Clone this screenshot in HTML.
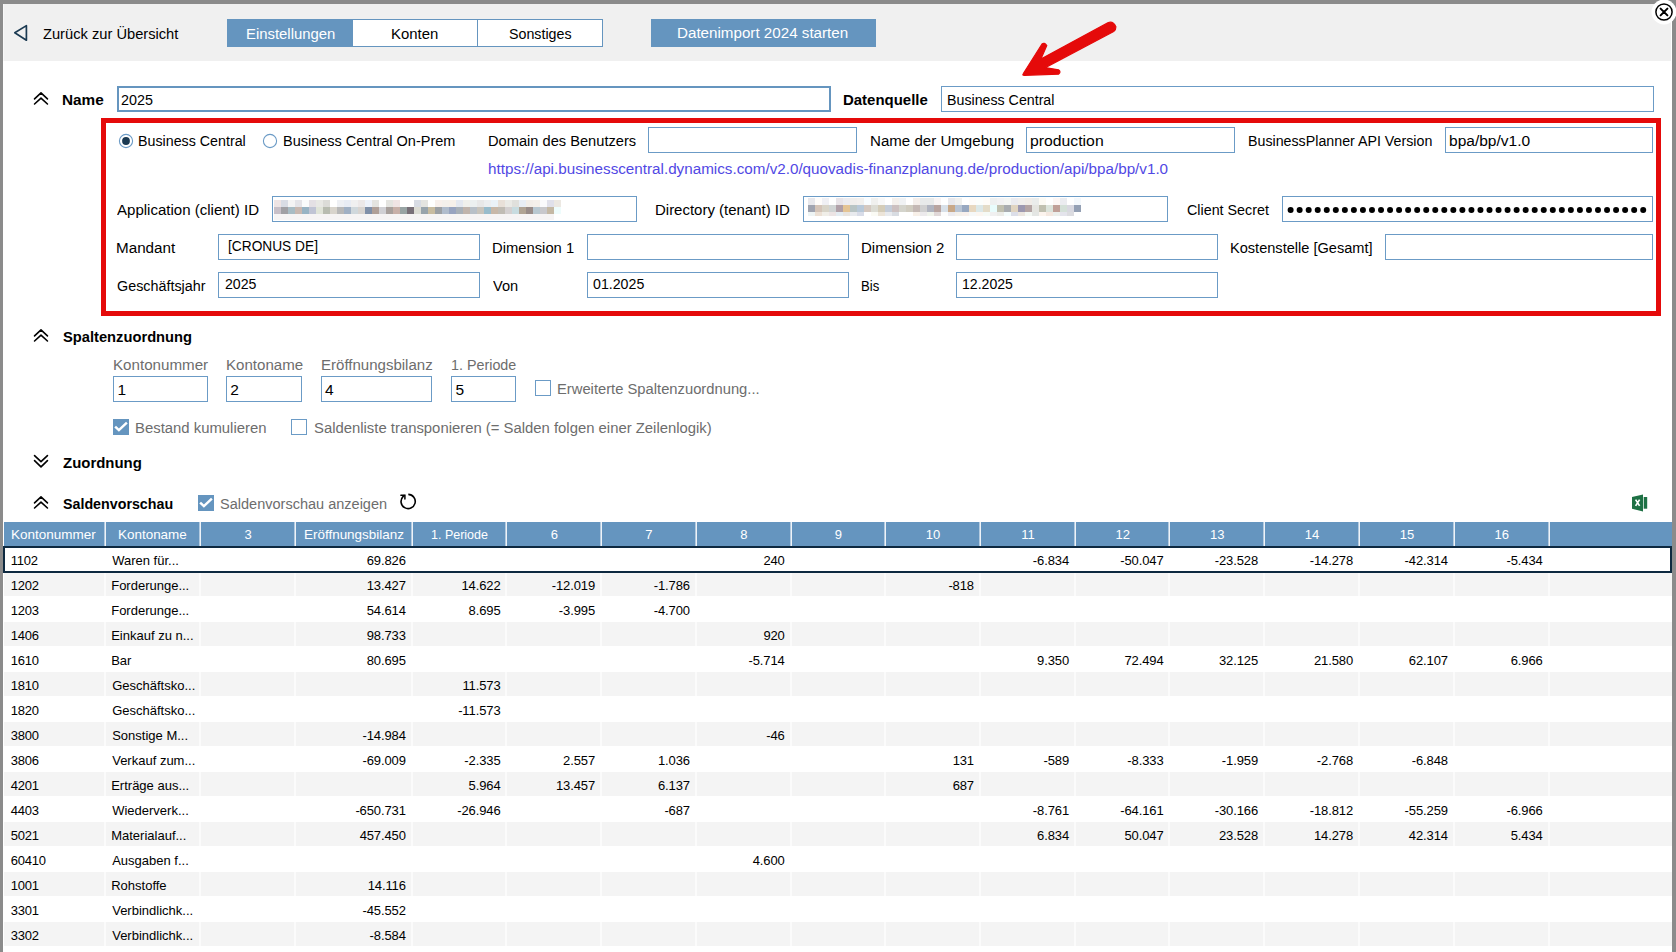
<!DOCTYPE html>
<html><head><meta charset="utf-8"><title>Datenimport Einstellungen</title>
<style>
html,body{margin:0;padding:0;}
body{width:1676px;height:952px;overflow:hidden;background:#fff;position:relative;font-family:"Liberation Sans",sans-serif;}
.b{position:absolute;}
.t{position:absolute;white-space:pre;transform-origin:0 0;line-height:normal;font-family:"Liberation Sans",sans-serif;color:#000;}
</style></head><body>
<div class="b" style="left:4px;top:4px;width:1667px;height:57px;background:#f0f0f0"></div>
<div class="b" style="left:3px;top:4px;width:1px;height:57px;background:#f7f7f7"></div>
<div class="b" style="left:0px;top:0px;width:1676px;height:4px;background:#8b8b8b"></div>
<div class="b" style="left:0px;top:0px;width:3px;height:952px;background:#8b8b8b"></div>
<div class="b" style="left:1672px;top:0px;width:4px;height:952px;background:#8b8b8b"></div>
<div class="b" style="left:227px;top:19px;width:376px;height:28px;background:#fff;border:1px solid #6595bf;box-sizing:border-box"></div>
<div class="b" style="left:227px;top:19px;width:126px;height:28px;background:#6595bf"></div>
<div class="b" style="left:477px;top:19px;width:1px;height:28px;background:#6595bf"></div>
<div class="b" style="left:651px;top:19px;width:225px;height:28px;background:#6595bf"></div>
<div class="b" style="left:117px;top:86px;width:714px;height:26px;border:2px solid #6595bf;box-sizing:border-box"></div>
<div class="b" style="left:941px;top:86px;width:713px;height:26px;border:1px solid #6b9bc6;box-sizing:border-box"></div>
<div class="b" style="left:101px;top:118px;width:1560px;height:198px;border:5px solid #e50a0a;box-sizing:border-box"></div>
<div class="b" style="left:648px;top:127px;width:209px;height:26px;border:1px solid #6b9bc6;box-sizing:border-box"></div>
<div class="b" style="left:1026px;top:127px;width:209px;height:26px;border:1px solid #6b9bc6;box-sizing:border-box"></div>
<div class="b" style="left:1445px;top:127px;width:208px;height:26px;border:1px solid #6b9bc6;box-sizing:border-box"></div>
<div class="b" style="left:272px;top:196px;width:365px;height:26px;border:1px solid #6b9bc6;box-sizing:border-box"></div>
<div class="b" style="left:803px;top:196px;width:365px;height:26px;border:1px solid #6b9bc6;box-sizing:border-box"></div>
<div class="b" style="left:1282px;top:196px;width:371px;height:26px;border:1px solid #6b9bc6;box-sizing:border-box"></div>
<div class="b" style="left:218px;top:234px;width:262px;height:26px;border:1px solid #6b9bc6;box-sizing:border-box"></div>
<div class="b" style="left:587px;top:234px;width:262px;height:26px;border:1px solid #6b9bc6;box-sizing:border-box"></div>
<div class="b" style="left:956px;top:234px;width:262px;height:26px;border:1px solid #6b9bc6;box-sizing:border-box"></div>
<div class="b" style="left:1385px;top:234px;width:268px;height:26px;border:1px solid #6b9bc6;box-sizing:border-box"></div>
<div class="b" style="left:218px;top:272px;width:262px;height:26px;border:1px solid #6b9bc6;box-sizing:border-box"></div>
<div class="b" style="left:587px;top:272px;width:262px;height:26px;border:1px solid #6b9bc6;box-sizing:border-box"></div>
<div class="b" style="left:956px;top:272px;width:262px;height:26px;border:1px solid #6b9bc6;box-sizing:border-box"></div>
<div class="b" style="left:113px;top:376px;width:95px;height:26px;border:1px solid #6b9bc6;box-sizing:border-box"></div>
<div class="b" style="left:226px;top:376px;width:76px;height:26px;border:1px solid #6b9bc6;box-sizing:border-box"></div>
<div class="b" style="left:321px;top:376px;width:111px;height:26px;border:1px solid #6b9bc6;box-sizing:border-box"></div>
<div class="b" style="left:451px;top:376px;width:65px;height:26px;border:1px solid #6b9bc6;box-sizing:border-box"></div>
<div class="b" style="left:535px;top:380px;width:16px;height:16px;border:1px solid #6b9bc6;box-sizing:border-box;background:#fff"></div>
<div class="b" style="left:113px;top:419px;width:16px;height:16px;background:#6595bf"></div>
<div class="b" style="left:291px;top:419px;width:16px;height:16px;border:1px solid #6b9bc6;box-sizing:border-box;background:#fff"></div>
<div class="b" style="left:198px;top:495px;width:16px;height:16px;background:#6595bf"></div>
<div class="b" style="left:4px;top:522px;width:1668px;height:24px;background:#6595bf"></div>
<div class="b" style="left:104px;top:522px;width:1px;height:24px;background:#b4cbe0"></div>
<div class="b" style="left:105px;top:522px;width:1px;height:24px;background:#eef3f8"></div>
<div class="b" style="left:199px;top:522px;width:1px;height:24px;background:#b4cbe0"></div>
<div class="b" style="left:200px;top:522px;width:1px;height:24px;background:#eef3f8"></div>
<div class="b" style="left:294px;top:522px;width:1px;height:24px;background:#b4cbe0"></div>
<div class="b" style="left:295px;top:522px;width:1px;height:24px;background:#eef3f8"></div>
<div class="b" style="left:411px;top:522px;width:1px;height:24px;background:#b4cbe0"></div>
<div class="b" style="left:412px;top:522px;width:1px;height:24px;background:#eef3f8"></div>
<div class="b" style="left:505px;top:522px;width:1px;height:24px;background:#b4cbe0"></div>
<div class="b" style="left:506px;top:522px;width:1px;height:24px;background:#eef3f8"></div>
<div class="b" style="left:600px;top:522px;width:1px;height:24px;background:#b4cbe0"></div>
<div class="b" style="left:601px;top:522px;width:1px;height:24px;background:#eef3f8"></div>
<div class="b" style="left:695px;top:522px;width:1px;height:24px;background:#b4cbe0"></div>
<div class="b" style="left:696px;top:522px;width:1px;height:24px;background:#eef3f8"></div>
<div class="b" style="left:790px;top:522px;width:1px;height:24px;background:#b4cbe0"></div>
<div class="b" style="left:791px;top:522px;width:1px;height:24px;background:#eef3f8"></div>
<div class="b" style="left:884px;top:522px;width:1px;height:24px;background:#b4cbe0"></div>
<div class="b" style="left:885px;top:522px;width:1px;height:24px;background:#eef3f8"></div>
<div class="b" style="left:979px;top:522px;width:1px;height:24px;background:#b4cbe0"></div>
<div class="b" style="left:980px;top:522px;width:1px;height:24px;background:#eef3f8"></div>
<div class="b" style="left:1074px;top:522px;width:1px;height:24px;background:#b4cbe0"></div>
<div class="b" style="left:1075px;top:522px;width:1px;height:24px;background:#eef3f8"></div>
<div class="b" style="left:1168px;top:522px;width:1px;height:24px;background:#b4cbe0"></div>
<div class="b" style="left:1169px;top:522px;width:1px;height:24px;background:#eef3f8"></div>
<div class="b" style="left:1263px;top:522px;width:1px;height:24px;background:#b4cbe0"></div>
<div class="b" style="left:1264px;top:522px;width:1px;height:24px;background:#eef3f8"></div>
<div class="b" style="left:1358px;top:522px;width:1px;height:24px;background:#b4cbe0"></div>
<div class="b" style="left:1359px;top:522px;width:1px;height:24px;background:#eef3f8"></div>
<div class="b" style="left:1453px;top:522px;width:1px;height:24px;background:#b4cbe0"></div>
<div class="b" style="left:1454px;top:522px;width:1px;height:24px;background:#eef3f8"></div>
<div class="b" style="left:1548px;top:522px;width:1px;height:24px;background:#b4cbe0"></div>
<div class="b" style="left:1549px;top:522px;width:1px;height:24px;background:#eef3f8"></div>
<div class="b" style="left:4px;top:572px;width:1668px;height:24px;background:#f4f4f4"></div>
<div class="b" style="left:104px;top:572px;width:2px;height:24px;background:#fbfbfb"></div>
<div class="b" style="left:199px;top:572px;width:2px;height:24px;background:#fbfbfb"></div>
<div class="b" style="left:294px;top:572px;width:2px;height:24px;background:#fbfbfb"></div>
<div class="b" style="left:411px;top:572px;width:2px;height:24px;background:#fbfbfb"></div>
<div class="b" style="left:505px;top:572px;width:2px;height:24px;background:#fbfbfb"></div>
<div class="b" style="left:600px;top:572px;width:2px;height:24px;background:#fbfbfb"></div>
<div class="b" style="left:695px;top:572px;width:2px;height:24px;background:#fbfbfb"></div>
<div class="b" style="left:790px;top:572px;width:2px;height:24px;background:#fbfbfb"></div>
<div class="b" style="left:884px;top:572px;width:2px;height:24px;background:#fbfbfb"></div>
<div class="b" style="left:979px;top:572px;width:2px;height:24px;background:#fbfbfb"></div>
<div class="b" style="left:1074px;top:572px;width:2px;height:24px;background:#fbfbfb"></div>
<div class="b" style="left:1168px;top:572px;width:2px;height:24px;background:#fbfbfb"></div>
<div class="b" style="left:1263px;top:572px;width:2px;height:24px;background:#fbfbfb"></div>
<div class="b" style="left:1358px;top:572px;width:2px;height:24px;background:#fbfbfb"></div>
<div class="b" style="left:1453px;top:572px;width:2px;height:24px;background:#fbfbfb"></div>
<div class="b" style="left:1548px;top:572px;width:2px;height:24px;background:#fbfbfb"></div>
<div class="b" style="left:4px;top:622px;width:1668px;height:24px;background:#f4f4f4"></div>
<div class="b" style="left:104px;top:622px;width:2px;height:24px;background:#fbfbfb"></div>
<div class="b" style="left:199px;top:622px;width:2px;height:24px;background:#fbfbfb"></div>
<div class="b" style="left:294px;top:622px;width:2px;height:24px;background:#fbfbfb"></div>
<div class="b" style="left:411px;top:622px;width:2px;height:24px;background:#fbfbfb"></div>
<div class="b" style="left:505px;top:622px;width:2px;height:24px;background:#fbfbfb"></div>
<div class="b" style="left:600px;top:622px;width:2px;height:24px;background:#fbfbfb"></div>
<div class="b" style="left:695px;top:622px;width:2px;height:24px;background:#fbfbfb"></div>
<div class="b" style="left:790px;top:622px;width:2px;height:24px;background:#fbfbfb"></div>
<div class="b" style="left:884px;top:622px;width:2px;height:24px;background:#fbfbfb"></div>
<div class="b" style="left:979px;top:622px;width:2px;height:24px;background:#fbfbfb"></div>
<div class="b" style="left:1074px;top:622px;width:2px;height:24px;background:#fbfbfb"></div>
<div class="b" style="left:1168px;top:622px;width:2px;height:24px;background:#fbfbfb"></div>
<div class="b" style="left:1263px;top:622px;width:2px;height:24px;background:#fbfbfb"></div>
<div class="b" style="left:1358px;top:622px;width:2px;height:24px;background:#fbfbfb"></div>
<div class="b" style="left:1453px;top:622px;width:2px;height:24px;background:#fbfbfb"></div>
<div class="b" style="left:1548px;top:622px;width:2px;height:24px;background:#fbfbfb"></div>
<div class="b" style="left:4px;top:672px;width:1668px;height:24px;background:#f4f4f4"></div>
<div class="b" style="left:104px;top:672px;width:2px;height:24px;background:#fbfbfb"></div>
<div class="b" style="left:199px;top:672px;width:2px;height:24px;background:#fbfbfb"></div>
<div class="b" style="left:294px;top:672px;width:2px;height:24px;background:#fbfbfb"></div>
<div class="b" style="left:411px;top:672px;width:2px;height:24px;background:#fbfbfb"></div>
<div class="b" style="left:505px;top:672px;width:2px;height:24px;background:#fbfbfb"></div>
<div class="b" style="left:600px;top:672px;width:2px;height:24px;background:#fbfbfb"></div>
<div class="b" style="left:695px;top:672px;width:2px;height:24px;background:#fbfbfb"></div>
<div class="b" style="left:790px;top:672px;width:2px;height:24px;background:#fbfbfb"></div>
<div class="b" style="left:884px;top:672px;width:2px;height:24px;background:#fbfbfb"></div>
<div class="b" style="left:979px;top:672px;width:2px;height:24px;background:#fbfbfb"></div>
<div class="b" style="left:1074px;top:672px;width:2px;height:24px;background:#fbfbfb"></div>
<div class="b" style="left:1168px;top:672px;width:2px;height:24px;background:#fbfbfb"></div>
<div class="b" style="left:1263px;top:672px;width:2px;height:24px;background:#fbfbfb"></div>
<div class="b" style="left:1358px;top:672px;width:2px;height:24px;background:#fbfbfb"></div>
<div class="b" style="left:1453px;top:672px;width:2px;height:24px;background:#fbfbfb"></div>
<div class="b" style="left:1548px;top:672px;width:2px;height:24px;background:#fbfbfb"></div>
<div class="b" style="left:4px;top:722px;width:1668px;height:24px;background:#f4f4f4"></div>
<div class="b" style="left:104px;top:722px;width:2px;height:24px;background:#fbfbfb"></div>
<div class="b" style="left:199px;top:722px;width:2px;height:24px;background:#fbfbfb"></div>
<div class="b" style="left:294px;top:722px;width:2px;height:24px;background:#fbfbfb"></div>
<div class="b" style="left:411px;top:722px;width:2px;height:24px;background:#fbfbfb"></div>
<div class="b" style="left:505px;top:722px;width:2px;height:24px;background:#fbfbfb"></div>
<div class="b" style="left:600px;top:722px;width:2px;height:24px;background:#fbfbfb"></div>
<div class="b" style="left:695px;top:722px;width:2px;height:24px;background:#fbfbfb"></div>
<div class="b" style="left:790px;top:722px;width:2px;height:24px;background:#fbfbfb"></div>
<div class="b" style="left:884px;top:722px;width:2px;height:24px;background:#fbfbfb"></div>
<div class="b" style="left:979px;top:722px;width:2px;height:24px;background:#fbfbfb"></div>
<div class="b" style="left:1074px;top:722px;width:2px;height:24px;background:#fbfbfb"></div>
<div class="b" style="left:1168px;top:722px;width:2px;height:24px;background:#fbfbfb"></div>
<div class="b" style="left:1263px;top:722px;width:2px;height:24px;background:#fbfbfb"></div>
<div class="b" style="left:1358px;top:722px;width:2px;height:24px;background:#fbfbfb"></div>
<div class="b" style="left:1453px;top:722px;width:2px;height:24px;background:#fbfbfb"></div>
<div class="b" style="left:1548px;top:722px;width:2px;height:24px;background:#fbfbfb"></div>
<div class="b" style="left:4px;top:772px;width:1668px;height:24px;background:#f4f4f4"></div>
<div class="b" style="left:104px;top:772px;width:2px;height:24px;background:#fbfbfb"></div>
<div class="b" style="left:199px;top:772px;width:2px;height:24px;background:#fbfbfb"></div>
<div class="b" style="left:294px;top:772px;width:2px;height:24px;background:#fbfbfb"></div>
<div class="b" style="left:411px;top:772px;width:2px;height:24px;background:#fbfbfb"></div>
<div class="b" style="left:505px;top:772px;width:2px;height:24px;background:#fbfbfb"></div>
<div class="b" style="left:600px;top:772px;width:2px;height:24px;background:#fbfbfb"></div>
<div class="b" style="left:695px;top:772px;width:2px;height:24px;background:#fbfbfb"></div>
<div class="b" style="left:790px;top:772px;width:2px;height:24px;background:#fbfbfb"></div>
<div class="b" style="left:884px;top:772px;width:2px;height:24px;background:#fbfbfb"></div>
<div class="b" style="left:979px;top:772px;width:2px;height:24px;background:#fbfbfb"></div>
<div class="b" style="left:1074px;top:772px;width:2px;height:24px;background:#fbfbfb"></div>
<div class="b" style="left:1168px;top:772px;width:2px;height:24px;background:#fbfbfb"></div>
<div class="b" style="left:1263px;top:772px;width:2px;height:24px;background:#fbfbfb"></div>
<div class="b" style="left:1358px;top:772px;width:2px;height:24px;background:#fbfbfb"></div>
<div class="b" style="left:1453px;top:772px;width:2px;height:24px;background:#fbfbfb"></div>
<div class="b" style="left:1548px;top:772px;width:2px;height:24px;background:#fbfbfb"></div>
<div class="b" style="left:4px;top:822px;width:1668px;height:24px;background:#f4f4f4"></div>
<div class="b" style="left:104px;top:822px;width:2px;height:24px;background:#fbfbfb"></div>
<div class="b" style="left:199px;top:822px;width:2px;height:24px;background:#fbfbfb"></div>
<div class="b" style="left:294px;top:822px;width:2px;height:24px;background:#fbfbfb"></div>
<div class="b" style="left:411px;top:822px;width:2px;height:24px;background:#fbfbfb"></div>
<div class="b" style="left:505px;top:822px;width:2px;height:24px;background:#fbfbfb"></div>
<div class="b" style="left:600px;top:822px;width:2px;height:24px;background:#fbfbfb"></div>
<div class="b" style="left:695px;top:822px;width:2px;height:24px;background:#fbfbfb"></div>
<div class="b" style="left:790px;top:822px;width:2px;height:24px;background:#fbfbfb"></div>
<div class="b" style="left:884px;top:822px;width:2px;height:24px;background:#fbfbfb"></div>
<div class="b" style="left:979px;top:822px;width:2px;height:24px;background:#fbfbfb"></div>
<div class="b" style="left:1074px;top:822px;width:2px;height:24px;background:#fbfbfb"></div>
<div class="b" style="left:1168px;top:822px;width:2px;height:24px;background:#fbfbfb"></div>
<div class="b" style="left:1263px;top:822px;width:2px;height:24px;background:#fbfbfb"></div>
<div class="b" style="left:1358px;top:822px;width:2px;height:24px;background:#fbfbfb"></div>
<div class="b" style="left:1453px;top:822px;width:2px;height:24px;background:#fbfbfb"></div>
<div class="b" style="left:1548px;top:822px;width:2px;height:24px;background:#fbfbfb"></div>
<div class="b" style="left:4px;top:872px;width:1668px;height:24px;background:#f4f4f4"></div>
<div class="b" style="left:104px;top:872px;width:2px;height:24px;background:#fbfbfb"></div>
<div class="b" style="left:199px;top:872px;width:2px;height:24px;background:#fbfbfb"></div>
<div class="b" style="left:294px;top:872px;width:2px;height:24px;background:#fbfbfb"></div>
<div class="b" style="left:411px;top:872px;width:2px;height:24px;background:#fbfbfb"></div>
<div class="b" style="left:505px;top:872px;width:2px;height:24px;background:#fbfbfb"></div>
<div class="b" style="left:600px;top:872px;width:2px;height:24px;background:#fbfbfb"></div>
<div class="b" style="left:695px;top:872px;width:2px;height:24px;background:#fbfbfb"></div>
<div class="b" style="left:790px;top:872px;width:2px;height:24px;background:#fbfbfb"></div>
<div class="b" style="left:884px;top:872px;width:2px;height:24px;background:#fbfbfb"></div>
<div class="b" style="left:979px;top:872px;width:2px;height:24px;background:#fbfbfb"></div>
<div class="b" style="left:1074px;top:872px;width:2px;height:24px;background:#fbfbfb"></div>
<div class="b" style="left:1168px;top:872px;width:2px;height:24px;background:#fbfbfb"></div>
<div class="b" style="left:1263px;top:872px;width:2px;height:24px;background:#fbfbfb"></div>
<div class="b" style="left:1358px;top:872px;width:2px;height:24px;background:#fbfbfb"></div>
<div class="b" style="left:1453px;top:872px;width:2px;height:24px;background:#fbfbfb"></div>
<div class="b" style="left:1548px;top:872px;width:2px;height:24px;background:#fbfbfb"></div>
<div class="b" style="left:4px;top:922px;width:1668px;height:24px;background:#f4f4f4"></div>
<div class="b" style="left:104px;top:922px;width:2px;height:24px;background:#fbfbfb"></div>
<div class="b" style="left:199px;top:922px;width:2px;height:24px;background:#fbfbfb"></div>
<div class="b" style="left:294px;top:922px;width:2px;height:24px;background:#fbfbfb"></div>
<div class="b" style="left:411px;top:922px;width:2px;height:24px;background:#fbfbfb"></div>
<div class="b" style="left:505px;top:922px;width:2px;height:24px;background:#fbfbfb"></div>
<div class="b" style="left:600px;top:922px;width:2px;height:24px;background:#fbfbfb"></div>
<div class="b" style="left:695px;top:922px;width:2px;height:24px;background:#fbfbfb"></div>
<div class="b" style="left:790px;top:922px;width:2px;height:24px;background:#fbfbfb"></div>
<div class="b" style="left:884px;top:922px;width:2px;height:24px;background:#fbfbfb"></div>
<div class="b" style="left:979px;top:922px;width:2px;height:24px;background:#fbfbfb"></div>
<div class="b" style="left:1074px;top:922px;width:2px;height:24px;background:#fbfbfb"></div>
<div class="b" style="left:1168px;top:922px;width:2px;height:24px;background:#fbfbfb"></div>
<div class="b" style="left:1263px;top:922px;width:2px;height:24px;background:#fbfbfb"></div>
<div class="b" style="left:1358px;top:922px;width:2px;height:24px;background:#fbfbfb"></div>
<div class="b" style="left:1453px;top:922px;width:2px;height:24px;background:#fbfbfb"></div>
<div class="b" style="left:1548px;top:922px;width:2px;height:24px;background:#fbfbfb"></div>
<div class="b" style="left:3px;top:546px;width:1669px;height:27px;border:2px solid #0d2940;box-sizing:border-box"></div>
<div class="b" style="left:274px;top:200px;width:7px;height:7px;background:#eee4e4"></div>
<div class="b" style="left:281px;top:200px;width:7px;height:7px;background:#d8dce4"></div>
<div class="b" style="left:288px;top:200px;width:7px;height:7px;background:#f4f4f4"></div>
<div class="b" style="left:295px;top:200px;width:7px;height:7px;background:#e4e4e8"></div>
<div class="b" style="left:302px;top:200px;width:7px;height:7px;background:#fafcfc"></div>
<div class="b" style="left:309px;top:200px;width:7px;height:7px;background:#e4e0e4"></div>
<div class="b" style="left:316px;top:200px;width:7px;height:7px;background:#e8e8e4"></div>
<div class="b" style="left:323px;top:200px;width:7px;height:7px;background:#dcdcd8"></div>
<div class="b" style="left:330px;top:200px;width:7px;height:7px;background:#ffffff"></div>
<div class="b" style="left:337px;top:200px;width:7px;height:7px;background:#eef0f4"></div>
<div class="b" style="left:344px;top:200px;width:7px;height:7px;background:#e8ecf4"></div>
<div class="b" style="left:351px;top:200px;width:7px;height:7px;background:#f0f0f0"></div>
<div class="b" style="left:358px;top:200px;width:7px;height:7px;background:#ece8e8"></div>
<div class="b" style="left:365px;top:200px;width:7px;height:7px;background:#eef2fa"></div>
<div class="b" style="left:372px;top:200px;width:7px;height:7px;background:#e4e4e0"></div>
<div class="b" style="left:379px;top:200px;width:7px;height:7px;background:#ffffff"></div>
<div class="b" style="left:386px;top:200px;width:7px;height:7px;background:#e4e4e0"></div>
<div class="b" style="left:393px;top:200px;width:7px;height:7px;background:#f0e4e4"></div>
<div class="b" style="left:400px;top:200px;width:7px;height:7px;background:#ffffff"></div>
<div class="b" style="left:407px;top:200px;width:7px;height:7px;background:#ffffff"></div>
<div class="b" style="left:414px;top:200px;width:7px;height:7px;background:#d8dce4"></div>
<div class="b" style="left:421px;top:200px;width:7px;height:7px;background:#e4e4e0"></div>
<div class="b" style="left:428px;top:200px;width:7px;height:7px;background:#ffffff"></div>
<div class="b" style="left:435px;top:200px;width:7px;height:7px;background:#f8f0ec"></div>
<div class="b" style="left:442px;top:200px;width:7px;height:7px;background:#f4f0ec"></div>
<div class="b" style="left:449px;top:200px;width:7px;height:7px;background:#f6f0ea"></div>
<div class="b" style="left:456px;top:200px;width:7px;height:7px;background:#e4e8f0"></div>
<div class="b" style="left:463px;top:200px;width:7px;height:7px;background:#f0f0ec"></div>
<div class="b" style="left:470px;top:200px;width:7px;height:7px;background:#ecf0f0"></div>
<div class="b" style="left:477px;top:200px;width:7px;height:7px;background:#e8e8e8"></div>
<div class="b" style="left:484px;top:200px;width:7px;height:7px;background:#eceef0"></div>
<div class="b" style="left:491px;top:200px;width:7px;height:7px;background:#eaf2f8"></div>
<div class="b" style="left:498px;top:200px;width:7px;height:7px;background:#e8e0d8"></div>
<div class="b" style="left:505px;top:200px;width:7px;height:7px;background:#eaeae6"></div>
<div class="b" style="left:512px;top:200px;width:7px;height:7px;background:#e0e0dc"></div>
<div class="b" style="left:519px;top:200px;width:7px;height:7px;background:#e8eef4"></div>
<div class="b" style="left:526px;top:200px;width:7px;height:7px;background:#f2eee8"></div>
<div class="b" style="left:533px;top:200px;width:7px;height:7px;background:#f4f0ea"></div>
<div class="b" style="left:540px;top:200px;width:7px;height:7px;background:#fafafc"></div>
<div class="b" style="left:547px;top:200px;width:7px;height:7px;background:#e0e0ea"></div>
<div class="b" style="left:554px;top:200px;width:7px;height:7px;background:#ece8e2"></div>
<div class="b" style="left:561px;top:200px;width:7px;height:7px;background:#ffffff"></div>
<div class="b" style="left:274px;top:207px;width:7px;height:7px;background:#c8c0c8"></div>
<div class="b" style="left:281px;top:207px;width:7px;height:7px;background:#a0a0a4"></div>
<div class="b" style="left:288px;top:207px;width:7px;height:7px;background:#a8bcc4"></div>
<div class="b" style="left:295px;top:207px;width:7px;height:7px;background:#c8b8b0"></div>
<div class="b" style="left:302px;top:207px;width:7px;height:7px;background:#98b4c4"></div>
<div class="b" style="left:309px;top:207px;width:7px;height:7px;background:#c0c4d4"></div>
<div class="b" style="left:316px;top:207px;width:7px;height:7px;background:#e0e4d8"></div>
<div class="b" style="left:323px;top:207px;width:7px;height:7px;background:#b8bcb0"></div>
<div class="b" style="left:330px;top:207px;width:7px;height:7px;background:#d8d4cc"></div>
<div class="b" style="left:337px;top:207px;width:7px;height:7px;background:#b8b8b8"></div>
<div class="b" style="left:344px;top:207px;width:7px;height:7px;background:#a0b0c4"></div>
<div class="b" style="left:351px;top:207px;width:7px;height:7px;background:#d0d8dc"></div>
<div class="b" style="left:358px;top:207px;width:7px;height:7px;background:#d8d4d0"></div>
<div class="b" style="left:365px;top:207px;width:7px;height:7px;background:#8090a8"></div>
<div class="b" style="left:372px;top:207px;width:7px;height:7px;background:#b0a098"></div>
<div class="b" style="left:379px;top:207px;width:7px;height:7px;background:#d0d0d4"></div>
<div class="b" style="left:386px;top:207px;width:7px;height:7px;background:#a8a09c"></div>
<div class="b" style="left:393px;top:207px;width:7px;height:7px;background:#c8b0a8"></div>
<div class="b" style="left:400px;top:207px;width:7px;height:7px;background:#98a4a4"></div>
<div class="b" style="left:407px;top:207px;width:7px;height:7px;background:#787078"></div>
<div class="b" style="left:414px;top:207px;width:7px;height:7px;background:#dcdcd4"></div>
<div class="b" style="left:421px;top:207px;width:7px;height:7px;background:#98a4ac"></div>
<div class="b" style="left:428px;top:207px;width:7px;height:7px;background:#c8bca0"></div>
<div class="b" style="left:435px;top:207px;width:7px;height:7px;background:#9ca0a4"></div>
<div class="b" style="left:442px;top:207px;width:7px;height:7px;background:#b0bccc"></div>
<div class="b" style="left:449px;top:207px;width:7px;height:7px;background:#98a4c0"></div>
<div class="b" style="left:456px;top:207px;width:7px;height:7px;background:#a8b0b8"></div>
<div class="b" style="left:463px;top:207px;width:7px;height:7px;background:#c0b4ac"></div>
<div class="b" style="left:470px;top:207px;width:7px;height:7px;background:#b8c0c8"></div>
<div class="b" style="left:477px;top:207px;width:7px;height:7px;background:#c8c4bc"></div>
<div class="b" style="left:484px;top:207px;width:7px;height:7px;background:#98bccc"></div>
<div class="b" style="left:491px;top:207px;width:7px;height:7px;background:#c8b8a8"></div>
<div class="b" style="left:498px;top:207px;width:7px;height:7px;background:#c0bcb4"></div>
<div class="b" style="left:505px;top:207px;width:7px;height:7px;background:#d4d0d0"></div>
<div class="b" style="left:512px;top:207px;width:7px;height:7px;background:#c8dce0"></div>
<div class="b" style="left:519px;top:207px;width:7px;height:7px;background:#b0a494"></div>
<div class="b" style="left:526px;top:207px;width:7px;height:7px;background:#988c88"></div>
<div class="b" style="left:533px;top:207px;width:7px;height:7px;background:#b8c8d0"></div>
<div class="b" style="left:540px;top:207px;width:7px;height:7px;background:#c8c8cc"></div>
<div class="b" style="left:547px;top:207px;width:7px;height:7px;background:#c4b8a4"></div>
<div class="b" style="left:554px;top:207px;width:7px;height:7px;background:#eefcfc"></div>
<div class="b" style="left:274px;top:214px;width:7px;height:6px;background:#f6f4f4"></div>
<div class="b" style="left:281px;top:214px;width:7px;height:6px;background:#f6f4f4"></div>
<div class="b" style="left:288px;top:214px;width:7px;height:6px;background:#f6f4f4"></div>
<div class="b" style="left:295px;top:214px;width:7px;height:6px;background:#f6f4f4"></div>
<div class="b" style="left:302px;top:214px;width:7px;height:6px;background:#f6f4f4"></div>
<div class="b" style="left:309px;top:214px;width:7px;height:6px;background:#f6f4f4"></div>
<div class="b" style="left:316px;top:214px;width:7px;height:6px;background:#f6f4f4"></div>
<div class="b" style="left:323px;top:214px;width:7px;height:6px;background:#f6f4f4"></div>
<div class="b" style="left:330px;top:214px;width:7px;height:6px;background:#f6f4f4"></div>
<div class="b" style="left:337px;top:214px;width:7px;height:6px;background:#f6f4f4"></div>
<div class="b" style="left:344px;top:214px;width:7px;height:6px;background:#f6f4f4"></div>
<div class="b" style="left:351px;top:214px;width:7px;height:6px;background:#f6f4f4"></div>
<div class="b" style="left:358px;top:214px;width:7px;height:6px;background:#f6f4f4"></div>
<div class="b" style="left:365px;top:214px;width:7px;height:6px;background:#f6f4f4"></div>
<div class="b" style="left:372px;top:214px;width:7px;height:6px;background:#f6f4f4"></div>
<div class="b" style="left:379px;top:214px;width:7px;height:6px;background:#f6f4f4"></div>
<div class="b" style="left:386px;top:214px;width:7px;height:6px;background:#f6f4f4"></div>
<div class="b" style="left:393px;top:214px;width:7px;height:6px;background:#f6f4f4"></div>
<div class="b" style="left:400px;top:214px;width:7px;height:6px;background:#f6f4f4"></div>
<div class="b" style="left:407px;top:214px;width:7px;height:6px;background:#f6f4f4"></div>
<div class="b" style="left:414px;top:214px;width:7px;height:6px;background:#f6f4f4"></div>
<div class="b" style="left:421px;top:214px;width:7px;height:6px;background:#f6f4f4"></div>
<div class="b" style="left:428px;top:214px;width:7px;height:6px;background:#f6f4f4"></div>
<div class="b" style="left:435px;top:214px;width:7px;height:6px;background:#f6f4f4"></div>
<div class="b" style="left:442px;top:214px;width:7px;height:6px;background:#f6f4f4"></div>
<div class="b" style="left:449px;top:214px;width:7px;height:6px;background:#f6f4f4"></div>
<div class="b" style="left:456px;top:214px;width:7px;height:6px;background:#f6f4f4"></div>
<div class="b" style="left:463px;top:214px;width:7px;height:6px;background:#f6f4f4"></div>
<div class="b" style="left:470px;top:214px;width:7px;height:6px;background:#f6f4f4"></div>
<div class="b" style="left:477px;top:214px;width:7px;height:6px;background:#f6f4f4"></div>
<div class="b" style="left:484px;top:214px;width:7px;height:6px;background:#f6f4f4"></div>
<div class="b" style="left:491px;top:214px;width:7px;height:6px;background:#f6f4f4"></div>
<div class="b" style="left:498px;top:214px;width:7px;height:6px;background:#f6f4f4"></div>
<div class="b" style="left:505px;top:214px;width:7px;height:6px;background:#f6f4f4"></div>
<div class="b" style="left:512px;top:214px;width:7px;height:6px;background:#f6f4f4"></div>
<div class="b" style="left:519px;top:214px;width:7px;height:6px;background:#f6f4f4"></div>
<div class="b" style="left:526px;top:214px;width:7px;height:6px;background:#f6f4f4"></div>
<div class="b" style="left:533px;top:214px;width:7px;height:6px;background:#f6f4f4"></div>
<div class="b" style="left:540px;top:214px;width:7px;height:6px;background:#f6f4f4"></div>
<div class="b" style="left:547px;top:214px;width:7px;height:6px;background:#f6f4f4"></div>
<div class="b" style="left:808px;top:198px;width:7px;height:7px;background:#e8e8ec"></div>
<div class="b" style="left:815px;top:198px;width:7px;height:7px;background:#fefcfa"></div>
<div class="b" style="left:822px;top:198px;width:7px;height:7px;background:#f0f0f4"></div>
<div class="b" style="left:829px;top:198px;width:7px;height:7px;background:#ffffff"></div>
<div class="b" style="left:836px;top:198px;width:7px;height:7px;background:#e8e4e8"></div>
<div class="b" style="left:843px;top:198px;width:7px;height:7px;background:#ececf0"></div>
<div class="b" style="left:850px;top:198px;width:7px;height:7px;background:#f0eeec"></div>
<div class="b" style="left:857px;top:198px;width:7px;height:7px;background:#f2f0ee"></div>
<div class="b" style="left:864px;top:198px;width:7px;height:7px;background:#f8fcff"></div>
<div class="b" style="left:871px;top:198px;width:7px;height:7px;background:#f0f0ee"></div>
<div class="b" style="left:878px;top:198px;width:7px;height:7px;background:#f8f8f8"></div>
<div class="b" style="left:885px;top:198px;width:7px;height:7px;background:#ffffff"></div>
<div class="b" style="left:892px;top:198px;width:7px;height:7px;background:#f4f0ec"></div>
<div class="b" style="left:899px;top:198px;width:7px;height:7px;background:#f0f2f4"></div>
<div class="b" style="left:906px;top:198px;width:7px;height:7px;background:#ffffff"></div>
<div class="b" style="left:913px;top:198px;width:7px;height:7px;background:#f4eeea"></div>
<div class="b" style="left:920px;top:198px;width:7px;height:7px;background:#e8eaea"></div>
<div class="b" style="left:927px;top:198px;width:7px;height:7px;background:#e8eaea"></div>
<div class="b" style="left:934px;top:198px;width:7px;height:7px;background:#f8f4f4"></div>
<div class="b" style="left:941px;top:198px;width:7px;height:7px;background:#ffffff"></div>
<div class="b" style="left:948px;top:198px;width:7px;height:7px;background:#e8e8ec"></div>
<div class="b" style="left:955px;top:198px;width:7px;height:7px;background:#f0f0ee"></div>
<div class="b" style="left:962px;top:198px;width:7px;height:7px;background:#ffffff"></div>
<div class="b" style="left:969px;top:198px;width:7px;height:7px;background:#fefcfa"></div>
<div class="b" style="left:976px;top:198px;width:7px;height:7px;background:#fcfefc"></div>
<div class="b" style="left:983px;top:198px;width:7px;height:7px;background:#fefcf8"></div>
<div class="b" style="left:990px;top:198px;width:7px;height:7px;background:#eef0f0"></div>
<div class="b" style="left:997px;top:198px;width:7px;height:7px;background:#f2f2f4"></div>
<div class="b" style="left:1004px;top:198px;width:7px;height:7px;background:#f4f6f4"></div>
<div class="b" style="left:1011px;top:198px;width:7px;height:7px;background:#ebebef"></div>
<div class="b" style="left:1018px;top:198px;width:7px;height:7px;background:#f0eeec"></div>
<div class="b" style="left:1025px;top:198px;width:7px;height:7px;background:#f0ece8"></div>
<div class="b" style="left:1032px;top:198px;width:7px;height:7px;background:#eaeceb"></div>
<div class="b" style="left:1039px;top:198px;width:7px;height:7px;background:#fcfaf4"></div>
<div class="b" style="left:1046px;top:198px;width:7px;height:7px;background:#ffffff"></div>
<div class="b" style="left:1053px;top:198px;width:7px;height:7px;background:#fcf6f4"></div>
<div class="b" style="left:1060px;top:198px;width:7px;height:7px;background:#ebecf0"></div>
<div class="b" style="left:1067px;top:198px;width:7px;height:7px;background:#ffffff"></div>
<div class="b" style="left:1074px;top:198px;width:7px;height:7px;background:#f4f8fc"></div>
<div class="b" style="left:808px;top:205px;width:7px;height:7px;background:#a0a4b0"></div>
<div class="b" style="left:815px;top:205px;width:7px;height:7px;background:#d4c4b8"></div>
<div class="b" style="left:822px;top:205px;width:7px;height:7px;background:#d8d4c8"></div>
<div class="b" style="left:829px;top:205px;width:7px;height:7px;background:#d0d4d4"></div>
<div class="b" style="left:836px;top:205px;width:7px;height:7px;background:#b0a0a8"></div>
<div class="b" style="left:843px;top:205px;width:7px;height:7px;background:#e4c494"></div>
<div class="b" style="left:850px;top:205px;width:7px;height:7px;background:#b8c4c4"></div>
<div class="b" style="left:857px;top:205px;width:7px;height:7px;background:#b8c8d8"></div>
<div class="b" style="left:864px;top:205px;width:7px;height:7px;background:#d4c8c0"></div>
<div class="b" style="left:871px;top:205px;width:7px;height:7px;background:#dcdcd4"></div>
<div class="b" style="left:878px;top:205px;width:7px;height:7px;background:#d4ccb8"></div>
<div class="b" style="left:885px;top:205px;width:7px;height:7px;background:#c4ccd8"></div>
<div class="b" style="left:892px;top:205px;width:7px;height:7px;background:#ccc0c0"></div>
<div class="b" style="left:899px;top:205px;width:7px;height:7px;background:#d4d4cc"></div>
<div class="b" style="left:906px;top:205px;width:7px;height:7px;background:#d0ccc0"></div>
<div class="b" style="left:913px;top:205px;width:7px;height:7px;background:#c4b8b4"></div>
<div class="b" style="left:920px;top:205px;width:7px;height:7px;background:#d0d0d0"></div>
<div class="b" style="left:927px;top:205px;width:7px;height:7px;background:#b0b4c0"></div>
<div class="b" style="left:934px;top:205px;width:7px;height:7px;background:#b8a4a0"></div>
<div class="b" style="left:941px;top:205px;width:7px;height:7px;background:#d8e0e8"></div>
<div class="b" style="left:948px;top:205px;width:7px;height:7px;background:#c8a888"></div>
<div class="b" style="left:955px;top:205px;width:7px;height:7px;background:#b8c4d4"></div>
<div class="b" style="left:962px;top:205px;width:7px;height:7px;background:#98a8c0"></div>
<div class="b" style="left:969px;top:205px;width:7px;height:7px;background:#e8d8c0"></div>
<div class="b" style="left:976px;top:205px;width:7px;height:7px;background:#dce8e8"></div>
<div class="b" style="left:983px;top:205px;width:7px;height:7px;background:#e4dcc8"></div>
<div class="b" style="left:990px;top:205px;width:7px;height:7px;background:#e8fcfc"></div>
<div class="b" style="left:997px;top:205px;width:7px;height:7px;background:#c0c0b0"></div>
<div class="b" style="left:1004px;top:205px;width:7px;height:7px;background:#a8acb0"></div>
<div class="b" style="left:1011px;top:205px;width:7px;height:7px;background:#e0d4c0"></div>
<div class="b" style="left:1018px;top:205px;width:7px;height:7px;background:#9c98b0"></div>
<div class="b" style="left:1025px;top:205px;width:7px;height:7px;background:#b4a4a4"></div>
<div class="b" style="left:1032px;top:205px;width:7px;height:7px;background:#e4e4e0"></div>
<div class="b" style="left:1039px;top:205px;width:7px;height:7px;background:#c0c0b0"></div>
<div class="b" style="left:1046px;top:205px;width:7px;height:7px;background:#dce4dc"></div>
<div class="b" style="left:1053px;top:205px;width:7px;height:7px;background:#c0a098"></div>
<div class="b" style="left:1060px;top:205px;width:7px;height:7px;background:#d4e0d8"></div>
<div class="b" style="left:1067px;top:205px;width:7px;height:7px;background:#d8d8e0"></div>
<div class="b" style="left:1074px;top:205px;width:7px;height:7px;background:#94a0b4"></div>
<div class="b" style="left:808px;top:212px;width:7px;height:4px;background:#eef4f4"></div>
<div class="b" style="left:815px;top:212px;width:7px;height:4px;background:#ece0d4"></div>
<div class="b" style="left:822px;top:212px;width:7px;height:4px;background:#f0eee8"></div>
<div class="b" style="left:829px;top:212px;width:7px;height:4px;background:#ece4e4"></div>
<div class="b" style="left:836px;top:212px;width:7px;height:4px;background:#e4ecf2"></div>
<div class="b" style="left:843px;top:212px;width:7px;height:4px;background:#e8e4e0"></div>
<div class="b" style="left:850px;top:212px;width:7px;height:4px;background:#e8eaee"></div>
<div class="b" style="left:857px;top:212px;width:7px;height:4px;background:#d8dce8"></div>
<div class="b" style="left:864px;top:212px;width:7px;height:4px;background:#ffffff"></div>
<div class="b" style="left:871px;top:212px;width:7px;height:4px;background:#fafaf4"></div>
<div class="b" style="left:878px;top:212px;width:7px;height:4px;background:#ece4d8"></div>
<div class="b" style="left:885px;top:212px;width:7px;height:4px;background:#e8eaee"></div>
<div class="b" style="left:892px;top:212px;width:7px;height:4px;background:#d8dce2"></div>
<div class="b" style="left:899px;top:212px;width:7px;height:4px;background:#ffffff"></div>
<div class="b" style="left:906px;top:212px;width:7px;height:4px;background:#ffffff"></div>
<div class="b" style="left:913px;top:212px;width:7px;height:4px;background:#f8f0e8"></div>
<div class="b" style="left:920px;top:212px;width:7px;height:4px;background:#eceaec"></div>
<div class="b" style="left:927px;top:212px;width:7px;height:4px;background:#f0f4ec"></div>
<div class="b" style="left:934px;top:212px;width:7px;height:4px;background:#e0d8d8"></div>
<div class="b" style="left:941px;top:212px;width:7px;height:4px;background:#fcfcfc"></div>
<div class="b" style="left:948px;top:212px;width:7px;height:4px;background:#ecebef"></div>
<div class="b" style="left:955px;top:212px;width:7px;height:4px;background:#f4f0ea"></div>
<div class="b" style="left:962px;top:212px;width:7px;height:4px;background:#f8f0ec"></div>
<div class="b" style="left:969px;top:212px;width:7px;height:4px;background:#f6f8f8"></div>
<div class="b" style="left:976px;top:212px;width:7px;height:4px;background:#fcf6f0"></div>
<div class="b" style="left:983px;top:212px;width:7px;height:4px;background:#f6faf6"></div>
<div class="b" style="left:990px;top:212px;width:7px;height:4px;background:#f0f0f0"></div>
<div class="b" style="left:997px;top:212px;width:7px;height:4px;background:#ecece8"></div>
<div class="b" style="left:1004px;top:212px;width:7px;height:4px;background:#f4fcfc"></div>
<div class="b" style="left:1011px;top:212px;width:7px;height:4px;background:#dcdee8"></div>
<div class="b" style="left:1018px;top:212px;width:7px;height:4px;background:#ece6e0"></div>
<div class="b" style="left:1025px;top:212px;width:7px;height:4px;background:#f4f8f4"></div>
<div class="b" style="left:1032px;top:212px;width:7px;height:4px;background:#e4e6e4"></div>
<div class="b" style="left:1039px;top:212px;width:7px;height:4px;background:#fcf4ee"></div>
<div class="b" style="left:1046px;top:212px;width:7px;height:4px;background:#f4e8e0"></div>
<div class="b" style="left:1053px;top:212px;width:7px;height:4px;background:#ecefec"></div>
<div class="b" style="left:1060px;top:212px;width:7px;height:4px;background:#e4e4ec"></div>
<div class="b" style="left:1067px;top:212px;width:7px;height:4px;background:#dcdce0"></div>
<div class="b" style="left:1074px;top:212px;width:7px;height:4px;background:#ffffff"></div>
<svg width="1676" height="952" style="position:absolute;left:0;top:0">
<g fill="#000"><circle cx="1290.60" cy="210" r="3.0"/><circle cx="1299.64" cy="210" r="3.0"/><circle cx="1308.68" cy="210" r="3.0"/><circle cx="1317.72" cy="210" r="3.0"/><circle cx="1326.76" cy="210" r="3.0"/><circle cx="1335.81" cy="210" r="3.0"/><circle cx="1344.85" cy="210" r="3.0"/><circle cx="1353.89" cy="210" r="3.0"/><circle cx="1362.93" cy="210" r="3.0"/><circle cx="1371.97" cy="210" r="3.0"/><circle cx="1381.01" cy="210" r="3.0"/><circle cx="1390.05" cy="210" r="3.0"/><circle cx="1399.09" cy="210" r="3.0"/><circle cx="1408.13" cy="210" r="3.0"/><circle cx="1417.17" cy="210" r="3.0"/><circle cx="1426.22" cy="210" r="3.0"/><circle cx="1435.26" cy="210" r="3.0"/><circle cx="1444.30" cy="210" r="3.0"/><circle cx="1453.34" cy="210" r="3.0"/><circle cx="1462.38" cy="210" r="3.0"/><circle cx="1471.42" cy="210" r="3.0"/><circle cx="1480.46" cy="210" r="3.0"/><circle cx="1489.50" cy="210" r="3.0"/><circle cx="1498.54" cy="210" r="3.0"/><circle cx="1507.58" cy="210" r="3.0"/><circle cx="1516.63" cy="210" r="3.0"/><circle cx="1525.67" cy="210" r="3.0"/><circle cx="1534.71" cy="210" r="3.0"/><circle cx="1543.75" cy="210" r="3.0"/><circle cx="1552.79" cy="210" r="3.0"/><circle cx="1561.83" cy="210" r="3.0"/><circle cx="1570.87" cy="210" r="3.0"/><circle cx="1579.91" cy="210" r="3.0"/><circle cx="1588.95" cy="210" r="3.0"/><circle cx="1597.99" cy="210" r="3.0"/><circle cx="1607.04" cy="210" r="3.0"/><circle cx="1616.08" cy="210" r="3.0"/><circle cx="1625.12" cy="210" r="3.0"/><circle cx="1634.16" cy="210" r="3.0"/><circle cx="1643.20" cy="210" r="3.0"/></g>
<g fill="none" stroke="#000" stroke-width="1.6" stroke-linecap="round" stroke-linejoin="round">
<path d="M34.55 98.95 L41.00 92.90 L47.45 98.95 M34.55 104.00 L41.00 98.05 L47.45 104.00"/>
<path d="M34.55 335.95 L41.00 329.90 L47.45 335.95 M34.55 341.00 L41.00 335.05 L47.45 341.00"/>
<path d="M34.55 455.60 L41.00 461.70 L47.45 455.60 M34.55 460.65 L41.00 466.80 L47.45 460.65"/>
<path d="M34.55 502.95 L41.00 496.90 L47.45 502.95 M34.55 508.00 L41.00 502.05 L47.45 508.00"/>
</g>
<path d="M14.8 32.8 L26.4 25.6 L26.4 40.2 Z" fill="none" stroke="#1b3a52" stroke-width="1.7" stroke-linejoin="round"/>
<circle cx="126" cy="141" r="6.6" fill="#fff" stroke="#6b9bc6" stroke-width="1.1"/>
<circle cx="126" cy="141" r="3.9" fill="#1b3a52"/>
<circle cx="270" cy="141" r="6.6" fill="#fff" stroke="#6b9bc6" stroke-width="1.1"/>
<path d="M116.0 427.4 L118.9 430.2 L126.0 423.4" fill="none" stroke="#fff" stroke-width="2.4" stroke-linecap="square"/>
<path d="M201.0 503.4 L203.9 506.2 L211.0 499.4" fill="none" stroke="#fff" stroke-width="2.4" stroke-linecap="square"/>
<path d="M408.3 494.4 A7.1 7.1 0 1 1 403.0 496.6 L404.6 495.2" fill="none" stroke="#000" stroke-width="1.6"/>
<path d="M400.9 495.2 L404.9 495.2 L404.9 499.0" fill="none" stroke="#000" stroke-width="1.5" stroke-linecap="round" stroke-linejoin="miter"/>
<g>
<path d="M1632 497 L1643 494.6 L1643 511.6 L1632 508.8 Z" fill="#1e7145"/>
<rect x="1643.7" y="497" width="3.5" height="11.7" fill="#1e7145"/>
<path d="M1635.6 499.6 L1639.6 505.9 M1639.6 499.6 L1635.6 505.9" stroke="#fff" stroke-width="1.7"/>
</g>
<path d="M1023.2 73.8 L1042.0 44.0 Q1044.2 42.0 1046.8 45.5 L1040.9 59.1 L1107.8 22.7 Q1113 20.5 1115.9 26.8 Q1116 30 1113.7 31.5 L1045.3 67.6 L1058.5 69.8 Q1061.5 72 1058.5 74.2 L1024.7 75.3 Q1022 75.5 1023.2 73.8 Z" fill="#e50a0a" stroke="#e50a0a" stroke-width="1.2" stroke-linejoin="round"/>
<circle cx="1664" cy="12" r="12.5" fill="#fff"/>
<circle cx="1664" cy="12" r="8.1" fill="none" stroke="#000" stroke-width="1.5"/>
<path d="M1660.6 8.6 L1667.4 15.4 M1667.4 8.6 L1660.6 15.4" stroke="#000" stroke-width="2" stroke-linecap="round"/>
</svg>
<span class="t" style="left:43.20px;top:25px;font-size:15.5px;transform:scaleX(0.9466)">Zurück zur Übersicht</span>
<span class="t" style="left:245.54px;top:25px;font-size:15.5px;color:#fff;transform:scaleX(0.9601)">Einstellungen</span>
<span class="t" style="left:390.74px;top:25px;font-size:15.5px;transform:scaleX(0.9620)">Konten</span>
<span class="t" style="left:509.40px;top:25px;font-size:15.5px;transform:scaleX(0.9192)">Sonstiges</span>
<span class="t" style="left:677.42px;top:24px;font-size:15.5px;color:#fff;transform:scaleX(0.9787)">Datenimport 2024 starten</span>
<span class="t" style="left:62.41px;top:91px;font-size:15.5px;font-weight:bold;transform:scaleX(0.9881)">Name</span>
<span class="t" style="left:121.40px;top:91px;font-size:15.5px;transform:scaleX(0.9244)">2025</span>
<span class="t" style="left:842.73px;top:91px;font-size:15.5px;font-weight:bold;transform:scaleX(0.9652)">Datenquelle</span>
<span class="t" style="left:946.58px;top:91px;font-size:15.5px;transform:scaleX(0.9169)">Business Central</span>
<span class="t" style="left:138.48px;top:132px;font-size:15.5px;transform:scaleX(0.9194)">Business Central</span>
<span class="t" style="left:282.66px;top:132px;font-size:15.5px;transform:scaleX(0.9351)">Business Central On-Prem</span>
<span class="t" style="left:487.56px;top:132px;font-size:15.5px;transform:scaleX(0.9446)">Domain des Benutzers</span>
<span class="t" style="left:869.93px;top:132px;font-size:15.5px;transform:scaleX(0.9729)">Name der Umgebung</span>
<span class="t" style="left:1029.58px;top:132px;font-size:15.5px;transform:scaleX(1.0175)">production</span>
<span class="t" style="left:1247.68px;top:132px;font-size:15.5px;transform:scaleX(0.9180)">BusinessPlanner API Version</span>
<span class="t" style="left:1448.50px;top:132px;font-size:15.5px;transform:scaleX(1.0014)">bpa/bp/v1.0</span>
<span class="t" style="left:487.52px;top:160px;font-size:15.5px;color:#5148e4;transform:scaleX(0.9817)">https://api.businesscentral.dynamics.com/v2.0/quovadis-finanzplanung.de/production/api/bpa/bp/v1.0</span>
<span class="t" style="left:117.30px;top:201px;font-size:15.5px;transform:scaleX(0.9695)">Application (client) ID</span>
<span class="t" style="left:654.83px;top:201px;font-size:15.5px;transform:scaleX(0.9657)">Directory (tenant) ID</span>
<span class="t" style="left:1187.30px;top:201px;font-size:15.5px;transform:scaleX(0.9226)">Client Secret</span>
<span class="t" style="left:116.32px;top:239px;font-size:15.5px;transform:scaleX(0.9814)">Mandant</span>
<span class="t" style="left:228.01px;top:237px;font-size:15.5px;transform:scaleX(0.8852)">[CRONUS DE]</span>
<span class="t" style="left:491.85px;top:239px;font-size:15.5px;transform:scaleX(0.9535)">Dimension 1</span>
<span class="t" style="left:860.53px;top:239px;font-size:15.5px;transform:scaleX(0.9689)">Dimension 2</span>
<span class="t" style="left:1229.56px;top:239px;font-size:15.5px;transform:scaleX(0.9400)">Kostenstelle [Gesamt]</span>
<span class="t" style="left:117.30px;top:277px;font-size:15.5px;transform:scaleX(0.9250)">Geschäftsjahr</span>
<span class="t" style="left:224.80px;top:275px;font-size:15.5px;transform:scaleX(0.9126)">2025</span>
<span class="t" style="left:492.80px;top:277px;font-size:15.5px;transform:scaleX(0.9424)">Von</span>
<span class="t" style="left:593.30px;top:275px;font-size:15.5px;transform:scaleX(0.9150)">01.2025</span>
<span class="t" style="left:860.65px;top:277px;font-size:15.5px;transform:scaleX(0.8469)">Bis</span>
<span class="t" style="left:962.39px;top:275px;font-size:15.5px;transform:scaleX(0.9080)">12.2025</span>
<span class="t" style="left:63.30px;top:328px;font-size:15.5px;font-weight:bold;transform:scaleX(0.9486)">Spaltenzuordnung</span>
<span class="t" style="left:112.62px;top:356px;font-size:15.5px;color:#6d6d6d;transform:scaleX(0.9772)">Kontonummer</span>
<span class="t" style="left:225.53px;top:356px;font-size:15.5px;color:#6d6d6d;transform:scaleX(0.9722)">Kontoname</span>
<span class="t" style="left:320.53px;top:356px;font-size:15.5px;color:#6d6d6d;transform:scaleX(0.9697)">Eröffnungsbilanz</span>
<span class="t" style="left:451.28px;top:356px;font-size:15.5px;color:#6d6d6d;transform:scaleX(0.9241)">1. Periode</span>
<span class="t" style="left:117.60px;top:381px;font-size:15.5px">1</span>
<span class="t" style="left:230.30px;top:381px;font-size:15.5px">2</span>
<span class="t" style="left:325.00px;top:381px;font-size:15.5px">4</span>
<span class="t" style="left:455.40px;top:381px;font-size:15.5px">5</span>
<span class="t" style="left:556.75px;top:380px;font-size:15.5px;color:#6d6d6d;transform:scaleX(0.9519)">Erweiterte Spaltenzuordnung...</span>
<span class="t" style="left:134.54px;top:419px;font-size:15.5px;color:#6d6d6d;transform:scaleX(0.9596)">Bestand kumulieren</span>
<span class="t" style="left:313.60px;top:419px;font-size:15.5px;color:#6d6d6d;transform:scaleX(0.9587)">Saldenliste transponieren (= Salden folgen einer Zeilenlogik)</span>
<span class="t" style="left:63.00px;top:454px;font-size:15.5px;font-weight:bold;transform:scaleX(0.9642)">Zuordnung</span>
<span class="t" style="left:63.00px;top:495px;font-size:15.5px;font-weight:bold;transform:scaleX(0.9198)">Saldenvorschau</span>
<span class="t" style="left:220.30px;top:495px;font-size:15.5px;color:#6d6d6d;transform:scaleX(0.9367)">Saldenvorschau anzeigen</span>
<span class="t" style="left:11.26px;top:527px;font-size:13px;color:#fff;transform:scaleX(1.0379)">Kontonummer</span>
<span class="t" style="left:117.97px;top:527px;font-size:13px;color:#fff;transform:scaleX(1.0343)">Kontoname</span>
<span class="t" style="left:244.50px;top:527px;font-size:13px;color:#fff">3</span>
<span class="t" style="left:303.62px;top:527px;font-size:13px;color:#fff;transform:scaleX(1.0346)">Eröffnungsbilanz</span>
<span class="t" style="left:431.20px;top:527px;font-size:13px;color:#fff;transform:scaleX(0.9605)">1. Periode</span>
<span class="t" style="left:550.65px;top:527px;font-size:13px;color:#fff">6</span>
<span class="t" style="left:645.35px;top:527px;font-size:13px;color:#fff">7</span>
<span class="t" style="left:740.20px;top:527px;font-size:13px;color:#fff">8</span>
<span class="t" style="left:834.85px;top:527px;font-size:13px;color:#fff">9</span>
<span class="t" style="left:925.84px;top:527px;font-size:13px;color:#fff">10</span>
<span class="t" style="left:1021.22px;top:527px;font-size:13px;color:#fff">11</span>
<span class="t" style="left:1115.54px;top:527px;font-size:13px;color:#fff">12</span>
<span class="t" style="left:1210.04px;top:527px;font-size:13px;color:#fff">13</span>
<span class="t" style="left:1304.79px;top:527px;font-size:13px;color:#fff">14</span>
<span class="t" style="left:1399.74px;top:527px;font-size:13px;color:#fff">15</span>
<span class="t" style="left:1494.59px;top:527px;font-size:13px;color:#fff">16</span>
<span class="t" style="left:10.80px;top:553px;font-size:13px;letter-spacing:-0.231px">1102</span>
<span class="t" style="left:112.20px;top:553px;font-size:13px">Waren für...</span>
<span class="t" style="left:366.76px;top:553px;font-size:13px;letter-spacing:-0.119px">69.826</span>
<span class="t" style="left:763.46px;top:553px;font-size:13px;letter-spacing:-0.161px">240</span>
<span class="t" style="left:1032.82px;top:553px;font-size:13px;letter-spacing:-0.110px">-6.834</span>
<span class="t" style="left:1120.20px;top:553px;font-size:13px;letter-spacing:-0.110px">-50.047</span>
<span class="t" style="left:1214.70px;top:553px;font-size:13px;letter-spacing:-0.110px">-23.528</span>
<span class="t" style="left:1309.70px;top:553px;font-size:13px;letter-spacing:-0.110px">-14.278</span>
<span class="t" style="left:1404.60px;top:553px;font-size:13px;letter-spacing:-0.110px">-42.314</span>
<span class="t" style="left:1506.52px;top:553px;font-size:13px;letter-spacing:-0.110px">-5.434</span>
<span class="t" style="left:10.80px;top:578px;font-size:13px;letter-spacing:-0.239px">1202</span>
<span class="t" style="left:111.20px;top:578px;font-size:13px">Forderunge...</span>
<span class="t" style="left:366.76px;top:578px;font-size:13px;letter-spacing:-0.119px">13.427</span>
<span class="t" style="left:461.46px;top:578px;font-size:13px;letter-spacing:-0.119px">14.622</span>
<span class="t" style="left:551.70px;top:578px;font-size:13px;letter-spacing:-0.110px">-12.019</span>
<span class="t" style="left:653.72px;top:578px;font-size:13px;letter-spacing:-0.110px">-1.786</span>
<span class="t" style="left:948.40px;top:578px;font-size:13px;letter-spacing:-0.129px">-818</span>
<span class="t" style="left:10.80px;top:603px;font-size:13px;letter-spacing:-0.239px">1203</span>
<span class="t" style="left:111.20px;top:603px;font-size:13px">Forderunge...</span>
<span class="t" style="left:366.76px;top:603px;font-size:13px;letter-spacing:-0.119px">54.614</span>
<span class="t" style="left:468.58px;top:603px;font-size:13px;letter-spacing:-0.121px">8.695</span>
<span class="t" style="left:558.82px;top:603px;font-size:13px;letter-spacing:-0.110px">-3.995</span>
<span class="t" style="left:653.72px;top:603px;font-size:13px;letter-spacing:-0.110px">-4.700</span>
<span class="t" style="left:10.80px;top:628px;font-size:13px;letter-spacing:-0.239px">1406</span>
<span class="t" style="left:111.20px;top:628px;font-size:13px">Einkauf zu n...</span>
<span class="t" style="left:366.76px;top:628px;font-size:13px;letter-spacing:-0.119px">98.733</span>
<span class="t" style="left:763.46px;top:628px;font-size:13px;letter-spacing:-0.161px">920</span>
<span class="t" style="left:10.80px;top:653px;font-size:13px;letter-spacing:-0.239px">1610</span>
<span class="t" style="left:111.20px;top:653px;font-size:13px">Bar</span>
<span class="t" style="left:366.76px;top:653px;font-size:13px;letter-spacing:-0.119px">80.695</span>
<span class="t" style="left:748.52px;top:653px;font-size:13px;letter-spacing:-0.110px">-5.714</span>
<span class="t" style="left:1037.08px;top:653px;font-size:13px;letter-spacing:-0.121px">9.350</span>
<span class="t" style="left:1124.46px;top:653px;font-size:13px;letter-spacing:-0.119px">72.494</span>
<span class="t" style="left:1218.96px;top:653px;font-size:13px;letter-spacing:-0.119px">32.125</span>
<span class="t" style="left:1313.96px;top:653px;font-size:13px;letter-spacing:-0.119px">21.580</span>
<span class="t" style="left:1408.86px;top:653px;font-size:13px;letter-spacing:-0.119px">62.107</span>
<span class="t" style="left:1510.78px;top:653px;font-size:13px;letter-spacing:-0.121px">6.966</span>
<span class="t" style="left:10.80px;top:678px;font-size:13px;letter-spacing:-0.239px">1810</span>
<span class="t" style="left:112.20px;top:678px;font-size:13px">Geschäftsko...</span>
<span class="t" style="left:462.41px;top:678px;font-size:13px;letter-spacing:-0.116px">11.573</span>
<span class="t" style="left:10.80px;top:703px;font-size:13px;letter-spacing:-0.239px">1820</span>
<span class="t" style="left:112.20px;top:703px;font-size:13px">Geschäftsko...</span>
<span class="t" style="left:458.15px;top:703px;font-size:13px;letter-spacing:-0.107px">-11.573</span>
<span class="t" style="left:10.80px;top:728px;font-size:13px;letter-spacing:-0.239px">3800</span>
<span class="t" style="left:112.20px;top:728px;font-size:13px">Sonstige M...</span>
<span class="t" style="left:362.50px;top:728px;font-size:13px;letter-spacing:-0.110px">-14.984</span>
<span class="t" style="left:766.32px;top:728px;font-size:13px;letter-spacing:-0.139px">-46</span>
<span class="t" style="left:10.80px;top:753px;font-size:13px;letter-spacing:-0.239px">3806</span>
<span class="t" style="left:112.20px;top:753px;font-size:13px">Verkauf zum...</span>
<span class="t" style="left:362.50px;top:753px;font-size:13px;letter-spacing:-0.110px">-69.009</span>
<span class="t" style="left:464.32px;top:753px;font-size:13px;letter-spacing:-0.110px">-2.335</span>
<span class="t" style="left:563.08px;top:753px;font-size:13px;letter-spacing:-0.121px">2.557</span>
<span class="t" style="left:657.98px;top:753px;font-size:13px;letter-spacing:-0.121px">1.036</span>
<span class="t" style="left:952.66px;top:753px;font-size:13px;letter-spacing:-0.161px">131</span>
<span class="t" style="left:1043.50px;top:753px;font-size:13px;letter-spacing:-0.129px">-589</span>
<span class="t" style="left:1127.32px;top:753px;font-size:13px;letter-spacing:-0.110px">-8.333</span>
<span class="t" style="left:1221.82px;top:753px;font-size:13px;letter-spacing:-0.110px">-1.959</span>
<span class="t" style="left:1316.82px;top:753px;font-size:13px;letter-spacing:-0.110px">-2.768</span>
<span class="t" style="left:1411.72px;top:753px;font-size:13px;letter-spacing:-0.110px">-6.848</span>
<span class="t" style="left:10.80px;top:778px;font-size:13px;letter-spacing:-0.239px">4201</span>
<span class="t" style="left:111.20px;top:778px;font-size:13px">Erträge aus...</span>
<span class="t" style="left:468.58px;top:778px;font-size:13px;letter-spacing:-0.121px">5.964</span>
<span class="t" style="left:555.96px;top:778px;font-size:13px;letter-spacing:-0.119px">13.457</span>
<span class="t" style="left:657.98px;top:778px;font-size:13px;letter-spacing:-0.121px">6.137</span>
<span class="t" style="left:952.66px;top:778px;font-size:13px;letter-spacing:-0.161px">687</span>
<span class="t" style="left:10.80px;top:803px;font-size:13px;letter-spacing:-0.239px">4403</span>
<span class="t" style="left:112.20px;top:803px;font-size:13px">Wiederverk...</span>
<span class="t" style="left:355.38px;top:803px;font-size:13px;letter-spacing:-0.109px">-650.731</span>
<span class="t" style="left:457.20px;top:803px;font-size:13px;letter-spacing:-0.110px">-26.946</span>
<span class="t" style="left:664.40px;top:803px;font-size:13px;letter-spacing:-0.129px">-687</span>
<span class="t" style="left:1032.82px;top:803px;font-size:13px;letter-spacing:-0.110px">-8.761</span>
<span class="t" style="left:1120.20px;top:803px;font-size:13px;letter-spacing:-0.110px">-64.161</span>
<span class="t" style="left:1214.70px;top:803px;font-size:13px;letter-spacing:-0.110px">-30.166</span>
<span class="t" style="left:1309.70px;top:803px;font-size:13px;letter-spacing:-0.110px">-18.812</span>
<span class="t" style="left:1404.60px;top:803px;font-size:13px;letter-spacing:-0.110px">-55.259</span>
<span class="t" style="left:1506.52px;top:803px;font-size:13px;letter-spacing:-0.110px">-6.966</span>
<span class="t" style="left:10.80px;top:828px;font-size:13px;letter-spacing:-0.239px">5021</span>
<span class="t" style="left:111.20px;top:828px;font-size:13px">Materialauf...</span>
<span class="t" style="left:359.64px;top:828px;font-size:13px;letter-spacing:-0.117px">457.450</span>
<span class="t" style="left:1037.08px;top:828px;font-size:13px;letter-spacing:-0.121px">6.834</span>
<span class="t" style="left:1124.46px;top:828px;font-size:13px;letter-spacing:-0.119px">50.047</span>
<span class="t" style="left:1218.96px;top:828px;font-size:13px;letter-spacing:-0.119px">23.528</span>
<span class="t" style="left:1313.96px;top:828px;font-size:13px;letter-spacing:-0.119px">14.278</span>
<span class="t" style="left:1408.86px;top:828px;font-size:13px;letter-spacing:-0.119px">42.314</span>
<span class="t" style="left:1510.78px;top:828px;font-size:13px;letter-spacing:-0.121px">5.434</span>
<span class="t" style="left:10.80px;top:853px;font-size:13px;letter-spacing:-0.224px">60410</span>
<span class="t" style="left:112.20px;top:853px;font-size:13px">Ausgaben f...</span>
<span class="t" style="left:752.78px;top:853px;font-size:13px;letter-spacing:-0.121px">4.600</span>
<span class="t" style="left:10.80px;top:878px;font-size:13px;letter-spacing:-0.239px">1001</span>
<span class="t" style="left:111.20px;top:878px;font-size:13px">Rohstoffe</span>
<span class="t" style="left:367.71px;top:878px;font-size:13px;letter-spacing:-0.116px">14.116</span>
<span class="t" style="left:10.80px;top:903px;font-size:13px;letter-spacing:-0.239px">3301</span>
<span class="t" style="left:112.20px;top:903px;font-size:13px">Verbindlichk...</span>
<span class="t" style="left:362.50px;top:903px;font-size:13px;letter-spacing:-0.110px">-45.552</span>
<span class="t" style="left:10.80px;top:928px;font-size:13px;letter-spacing:-0.239px">3302</span>
<span class="t" style="left:112.20px;top:928px;font-size:13px">Verbindlichk...</span>
<span class="t" style="left:369.62px;top:928px;font-size:13px;letter-spacing:-0.110px">-8.584</span>
</body></html>
